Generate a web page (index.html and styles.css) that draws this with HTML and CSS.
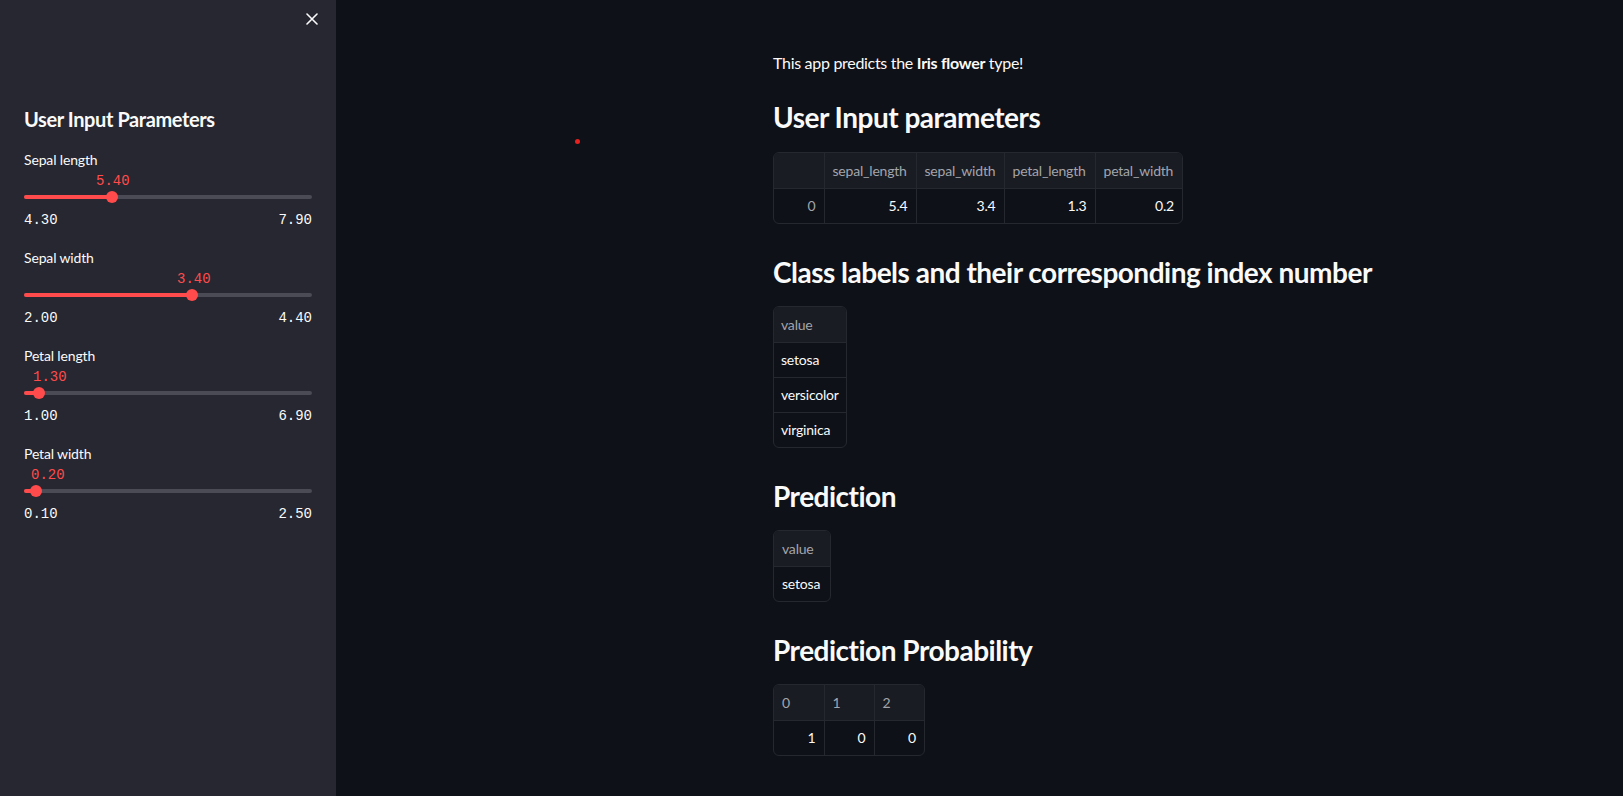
FILE: index.html
```html
<!DOCTYPE html>
<html lang="en">
<head>
<meta charset="utf-8">
<title>Iris Flower Prediction App</title>
<link rel="stylesheet" href="styles.css">
</head>
<body>
<div class="app">
  <aside class="sidebar">
    <div class="sidebar-header">
      <button class="close-btn" aria-label="Close sidebar">
        <svg width="12" height="12" viewBox="0 0 12 12"><path d="M1 1L11 11M11 1L1 11" stroke="#fafafa" stroke-width="1.6" stroke-linecap="round"/></svg>
      </button>
    </div>
    <h2 class="sidebar-title">User Input Parameters</h2>

    <div class="slider">
      <div class="slider-label">Sepal length</div>
      <div class="slider-value" style="padding-left:72px">5.40</div>
      <div class="track-wrap"><div class="track"><div class="fill" style="width:30.56%"></div><div class="thumb" style="left:30.56%"></div></div></div>
      <div class="minmax"><span>4.30</span><span>7.90</span></div>
    </div>

    <div class="slider">
      <div class="slider-label">Sepal width</div>
      <div class="slider-value" style="padding-left:153px">3.40</div>
      <div class="track-wrap"><div class="track"><div class="fill" style="width:58.33%"></div><div class="thumb" style="left:58.33%"></div></div></div>
      <div class="minmax"><span>2.00</span><span>4.40</span></div>
    </div>

    <div class="slider">
      <div class="slider-label">Petal length</div>
      <div class="slider-value" style="padding-left:9px">1.30</div>
      <div class="track-wrap"><div class="track"><div class="fill" style="width:5.08%"></div><div class="thumb" style="left:5.08%"></div></div></div>
      <div class="minmax"><span>1.00</span><span>6.90</span></div>
    </div>

    <div class="slider">
      <div class="slider-label">Petal width</div>
      <div class="slider-value" style="padding-left:7px">0.20</div>
      <div class="track-wrap"><div class="track"><div class="fill" style="width:4.17%"></div><div class="thumb" style="left:4.17%"></div></div></div>
      <div class="minmax"><span>0.10</span><span>2.50</span></div>
    </div>
  </aside>

  <main class="main">
    <span class="status-dot"></span>
    <div class="content">
      <p class="intro">This app predicts the <strong>Iris flower</strong> type!</p>

      <h3 class="section-title first">User Input parameters</h3>
      <div class="df">
        <table class="t-input">
          <colgroup><col style="width:50px"><col style="width:92px"><col style="width:88px"><col style="width:91px"><col style="width:87px"></colgroup>
          <thead><tr><th></th><th>sepal_length</th><th>sepal_width</th><th>petal_length</th><th>petal_width</th></tr></thead>
          <tbody><tr><td class="idx">0</td><td class="num">5.4</td><td class="num">3.4</td><td class="num">1.3</td><td class="num">0.2</td></tr></tbody>
        </table>
      </div>

      <h3 class="section-title">Class labels and their corresponding index number</h3>
      <div class="df">
        <table class="t-labels">
          <thead><tr><th>value</th></tr></thead>
          <tbody>
            <tr><td>setosa</td></tr>
            <tr><td>versicolor</td></tr>
            <tr><td>virginica</td></tr>
          </tbody>
        </table>
      </div>

      <h3 class="section-title">Prediction</h3>
      <div class="df">
        <table class="t-pred">
          <colgroup><col style="width:56px"></colgroup>
          <thead><tr><th>value</th></tr></thead>
          <tbody><tr><td>setosa</td></tr></tbody>
        </table>
      </div>

      <h3 class="section-title">Prediction Probability</h3>
      <div class="df">
        <table class="t-proba">
          <colgroup><col style="width:50px"><col style="width:50px"><col style="width:50px"></colgroup>
          <thead><tr><th>0</th><th>1</th><th>2</th></tr></thead>
          <tbody><tr><td class="num">1</td><td class="num">0</td><td class="num">0</td></tr></tbody>
        </table>
      </div>
    </div>
  </main>
</div>
</body>
</html>
```
FILE: styles.css
```css
* { box-sizing: border-box; }
html, body { margin: 0; padding: 0; height: 100%; }
body {
  font-family: Lato, "Noto Sans", sans-serif;
  color: #fafafa;
  background: #0e1117;
  overflow: hidden;
}
.app { display: flex; height: 100vh; }

.sidebar {
  width: 336px;
  flex: none;
  background: #262730;
  padding: 13px 24px 0 24px;
  display: flex;
  flex-direction: column;
}
.sidebar-header { display: flex; justify-content: flex-end; height: 12px; margin-right: -6px; }
.close-btn { background: none; border: 0; padding: 0; width: 12px; height: 12px; display: block; cursor: pointer; }
.close-btn svg { display: block; }
.sidebar-title {
  margin: 80px 0 0 0;
  font-size: 20px;
  line-height: 28px;
  font-weight: 700;
  letter-spacing: -0.4px;
}
.slider { display: flex; flex-direction: column; margin-top: 17px; }
.slider + .slider { margin-top: 18px; }
.slider-label { font-size: 14px; line-height: 20px; margin-bottom: 1px; letter-spacing: -0.15px; }
.slider-value {
  font-family: "Liberation Mono", "DejaVu Sans Mono", monospace;
  font-size: 14px;
  line-height: 20px;
  color: #ff4b4b;
}
.track-wrap { height: 12px; display: flex; align-items: center; }
.track { position: relative; width: 100%; height: 4px; border-radius: 2px; background: #4a4b54; }
.fill { height: 4px; border-radius: 2px; background: #ff4b4b; }
.thumb {
  position: absolute;
  top: 50%;
  width: 12px; height: 12px;
  margin: -6px 0 0 -6px;
  border-radius: 50%;
  background: #ff4b4b;
}
.minmax {
  display: flex;
  justify-content: space-between;
  margin-top: 7px;
  font-family: "Liberation Mono", "DejaVu Sans Mono", monospace;
  font-size: 14px;
  line-height: 20px;
  color: #fafafa;
}

.main { flex: 1; position: relative; padding: 51px 0 0 437px; }
.status-dot {
  position: absolute;
  left: 239px; top: 139px;
  width: 5px; height: 5px;
  border-radius: 50%;
  background: #e8201e;
}
.content { display: flex; flex-direction: column; align-items: flex-start; }
.intro { margin: 0; font-size: 16px; line-height: 24px; letter-spacing: -0.3px; }
.intro strong { font-weight: 700; }
.section-title {
  margin: 31px 0 17px 0;
  font-size: 28px;
  line-height: 34px;
  font-weight: 700;
  letter-spacing: -0.5px;
}
.section-title.first { margin-top: 25px; margin-bottom: 18px; }

.df {
  border: 1px solid #26282f;
  border-radius: 6px;
  overflow: hidden;
}
.df table { border-collapse: collapse; table-layout: fixed; font-size: 14px; letter-spacing: -0.2px; }
.t-input { width: 408px; }
.t-labels { table-layout: auto; }
.t-pred { width: 56px; }
.t-proba { width: 150px; }
.df th, .df td {
  height: 35px;
  padding: 0 8px;
  border-right: 1px solid #26282f;
  border-bottom: 1px solid #26282f;
  white-space: nowrap;
  overflow: hidden;
}
.t-labels th, .t-labels td { padding: 0 7px; }
.df tr > :last-child { border-right: 0; }
.df tbody tr:last-child td { border-bottom: 0; }
.df th {
  background: #1a1c23;
  color: #a3a5ab;
  font-weight: 400;
  text-align: left;
}
.df td { color: #fafafa; text-align: left; }
.df td.num { text-align: right; }
.df td.idx { text-align: right; color: #a3a5ab; }
```
